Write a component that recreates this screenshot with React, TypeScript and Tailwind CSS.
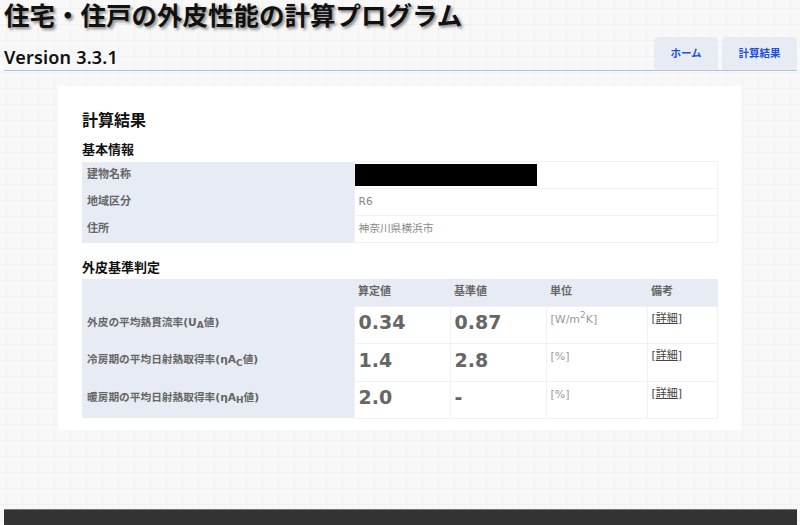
const basicRows = [
  { label: '建物名称', value: null },
  { label: '地域区分', value: 'R6' },
  { label: '住所', value: '神奈川県横浜市' },
];

const resultRows = [
  { name: '外皮の平均熱貫流率(U', sub: 'A', calc: '0.34', base: '0.87', unit: 'm2', h: 'h-[37px]' },
  { name: '冷房期の平均日射熱取得率(ηA', sub: 'C', calc: '1.4', base: '2.8', unit: '%', h: 'h-[38px]' },
  { name: '暖房期の平均日射熱取得率(ηA', sub: 'H', calc: '2.0', base: '-', unit: '%', h: 'h-[37px]' },
];

export default function App() {
  return (
    <div className="h-[525px] overflow-hidden bg-[#f8f8f8] bg-[linear-gradient(#f1f1f1_1px,transparent_1px),linear-gradient(90deg,#f1f1f1_1px,transparent_1px)] bg-[size:16px_16px] bg-[position:6px_8px] font-['DejaVu_Sans','Noto_Sans_CJK_JP',sans-serif] text-[#111]">
      {/* Header */}
      <div className="mr-[3px] ml-1 flex h-[71px] justify-between border-b border-[#a9c6e2]">
        <div>
          <h1 className="h-[37px] text-[25.5px] leading-[33px] font-bold whitespace-nowrap [text-shadow:2px_2px_3px_#888]">
            住宅・住戸の外皮性能の計算プログラム
          </h1>
          <p className="mt-2 font-['Noto_Sans',sans-serif] text-[18px] leading-6 font-semibold tracking-[0.2px]">Version 3.3.1</p>
        </div>
        <nav className="mt-[37px] flex gap-1 text-[10.5px] font-bold text-[#1f4fe0]">
          <a className="flex h-[33px] w-16 items-center justify-center rounded-t bg-[#e7ecf4]">ホーム</a>
          <a className="flex h-[33px] w-[75px] items-center justify-center rounded-t bg-[#e7ecf4]">計算結果</a>
        </nav>
      </div>

      {/* Main card */}
      <main className="mx-[58px] mt-[15px] h-[344px] bg-white px-6 pt-[23px]">
        <h2 className="text-[16px] leading-6 font-bold">計算結果</h2>

        <h3 className="mt-2 h-[20px] text-[13px] leading-[18px] font-bold">基本情報</h3>
        <table className="w-[636px] table-fixed border-collapse text-[11px] text-[#888]">
          <tbody>
            {basicRows.map((row) => (
              <tr key={row.label} className="h-[27px]">
                <th className="w-[272px] bg-[#e7ecf4] pt-px pl-[5px] text-left font-bold text-[#666]">{row.label}</th>
                <td className="border border-[#eef1f6] pl-1 text-[10.7px]">
                  {row.value ?? <div className="-ml-1 h-[22px] w-[182px] bg-black" />}
                </td>
              </tr>
            ))}
          </tbody>
        </table>

        <h3 className="mt-[16px] h-[20px] text-[13px] leading-[18px] font-bold">外皮基準判定</h3>
        <table className="w-[636px] table-fixed border-collapse text-[#666]">
          <thead>
            <tr className="h-[27px] bg-[#e7ecf4] text-left text-[11px] font-bold">
              <th className="w-[272px]"></th>
              <th className="w-24 pb-px pl-1">算定値</th>
              <th className="w-24 pb-px pl-1">基準値</th>
              <th className="w-[101px] pb-px pl-1">単位</th>
              <th className="pb-px pl-1">備考</th>
            </tr>
          </thead>
          <tbody>
            {resultRows.map((row) => (
              <tr key={row.name} className={row.h}>
                <th className="bg-[#e7ecf4] pb-[3px] pl-[5px] text-left text-[10.7px] font-bold">
                  {row.name}
                  <sub className="text-[9px]">{row.sub}</sub>値)
                </th>
                <td className="border border-[#eef1f6] pb-1 pl-1 align-middle text-[19px] font-bold">{row.calc}</td>
                <td className="border border-[#eef1f6] pb-1 pl-1 align-middle text-[19px] font-bold">{row.base}</td>
                <td className="border border-[#eef1f6] pt-[5px] pl-1 align-top text-[11px] leading-4 text-[#999]">
                  {row.unit === 'm2' ? (
                    <>
                      [W/m<sup className="text-[9px]">2</sup>K]
                    </>
                  ) : (
                    '[%]'
                  )}
                </td>
                <td className="border border-[#eef1f6] pt-1 pl-1 align-top text-[11px] leading-4 text-[#444]">
                  [<a className="underline">詳細</a>]
                </td>
              </tr>
            ))}
          </tbody>
        </table>
      </main>

      {/* Footer */}
      <footer className="mt-[79px] mr-[3px] ml-1 h-4 border-t border-[#777] bg-[#333]"></footer>
    </div>
  );
}
